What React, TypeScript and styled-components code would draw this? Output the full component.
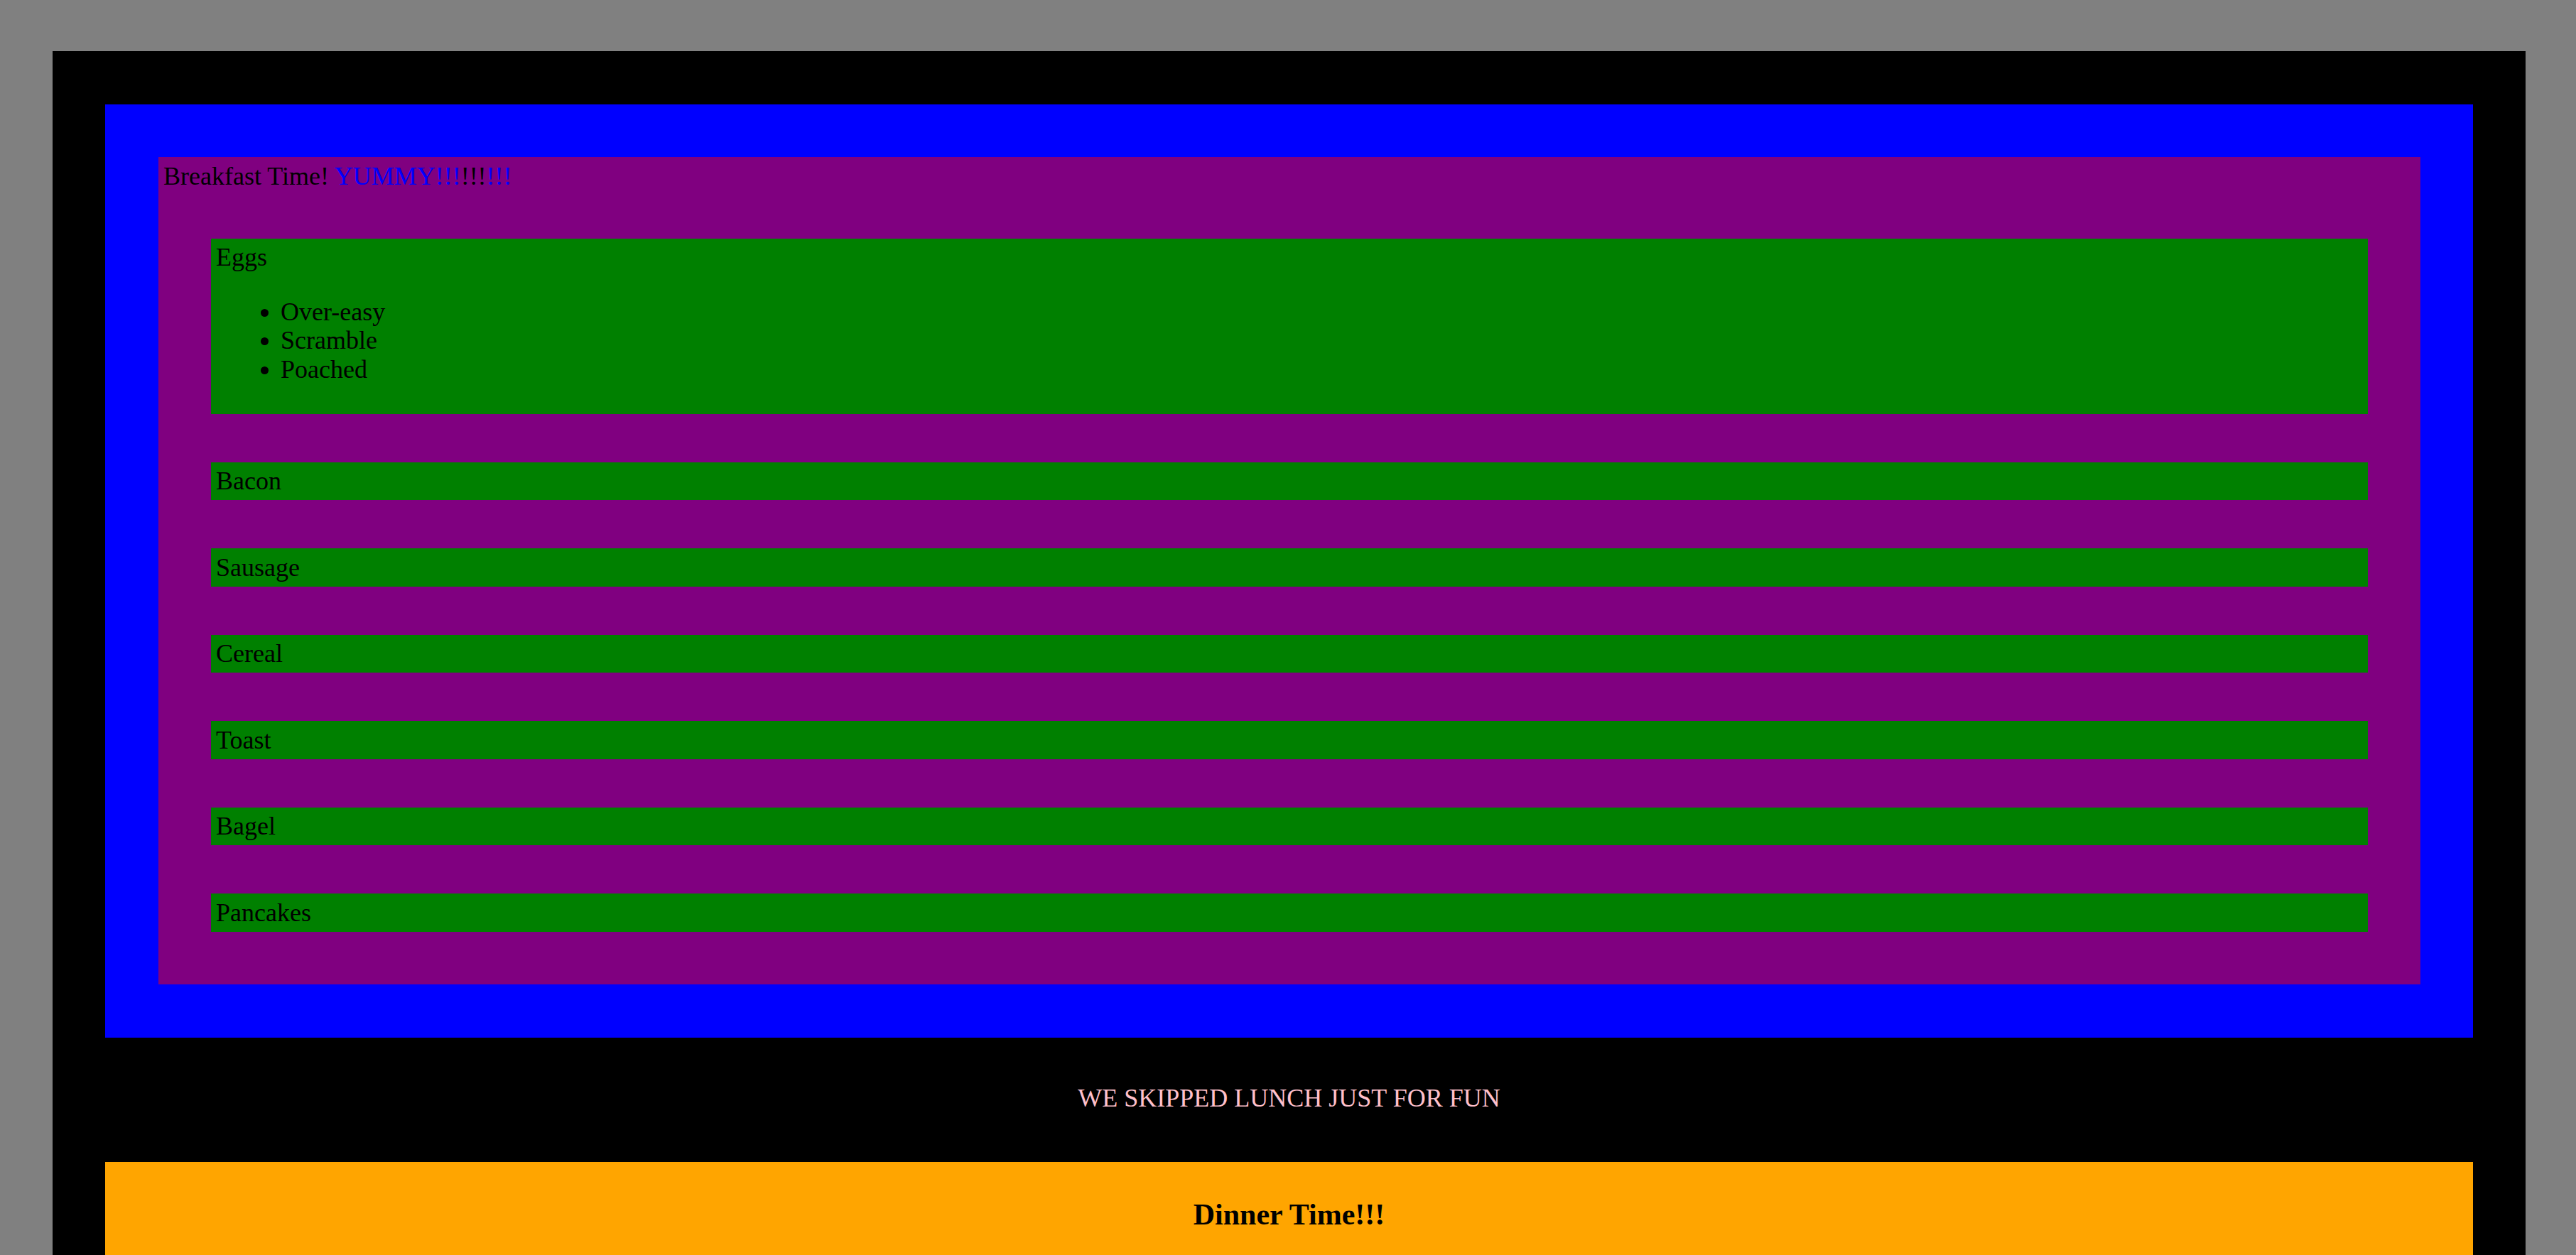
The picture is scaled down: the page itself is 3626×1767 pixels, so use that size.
import React from "react";
import styled, { createGlobalStyle } from "styled-components";

const GlobalStyle = createGlobalStyle`
  html, body {
    margin: 0;
    padding: 0;
    background: #808080;
  }
  body {
    font-family: "Liberation Serif", "Times New Roman", serif;
    font-size: 36px;
    line-height: 40.5px;
    color: #000;
  }
`;

const Page = styled.div`
  padding: 72px 71px 0 74px;
`;

const Frame = styled.main`
  background: #000;
  padding: 75px 74px 200px 74px;
`;

const Breakfast = styled.section`
  background: #0000ff;
  padding: 74px 74px 75px 75px;
`;

const Menu = styled.div`
  background: #800080;
  padding: 7px 0 74px 0;
`;

const MenuTitle = styled.div`
  padding: 0 7px;
`;

const Yummy = styled.span`
  color: #0000ff;
`;

const Plain = styled.span`
  color: #000;
`;

const Items = styled.div`
  display: flex;
  flex-direction: column;
  gap: 68px;
  margin: 67px 74px 0 74px;
`;

const Item = styled.div`
  background: #008000;
  padding: 6.5px 7px;
`;

const Options = styled.ul`
  margin: 36px 0;
  padding-left: 91px;
  list-style: disc;
`;

const Lunch = styled.p`
  margin: 0;
  padding: 65.5px 0 69.5px;
  color: #ffc0cb;
  text-align: center;
`;

const Dinner = styled.section`
  background: #ffa500;
  padding: 7px;
  min-height: 400px;
`;

const DinnerTitle = styled.h3`
  margin: 43px 0;
  font-size: 42px;
  line-height: 49px;
  font-weight: bold;
  text-align: center;
`;

const simple = ["Bacon", "Sausage", "Cereal", "Toast", "Bagel", "Pancakes"];

export default function App() {
  return (
    <>
      <GlobalStyle />
      <Page>
        <Frame>
          <Breakfast>
            <Menu>
              <MenuTitle>
                Breakfast Time!{" "}
                <Yummy>
                  YUMMY!!!<Plain>!!!</Plain>!!!
                </Yummy>
              </MenuTitle>
              <Items>
                <Item>
                  Eggs
                  <Options>
                    <li>Over-easy</li>
                    <li>Scramble</li>
                    <li>Poached</li>
                  </Options>
                </Item>
                {simple.map((s) => (
                  <Item key={s}>{s}</Item>
                ))}
              </Items>
            </Menu>
          </Breakfast>
          <Lunch>WE SKIPPED LUNCH JUST FOR FUN</Lunch>
          <Dinner>
            <DinnerTitle>Dinner Time!!!</DinnerTitle>
          </Dinner>
        </Frame>
      </Page>
    </>
  );
}
